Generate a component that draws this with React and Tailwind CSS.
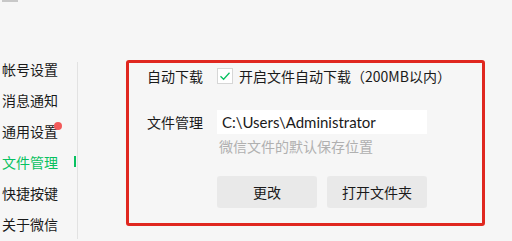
export default function App() {
  const items = ["帐号设置", "消息通知", "通用设置", "文件管理", "快捷按键", "关于微信"];
  return (
    <div
      className="w-[512px] h-[241px] bg-[#f6f6f6] overflow-hidden flex flex-col text-[#1a1a1a]"
      style={{ fontFamily: '"Noto Sans CJK SC", "Noto Sans", sans-serif' }}
    >
      <div className="ml-[2px] w-[16px] h-[2px] bg-[#c8c8c8] shrink-0" />
      <div className="flex flex-1">
        {/* sidebar */}
        <div className="w-[78px] flex flex-col pt-[51px]">
          {items.map((x, index) => (
            <div
              key={index}
              className={
                "relative h-[31px] flex items-center pl-[2px] text-[14px] leading-none border-r " +
                (index === 0 ? "border-transparent" : "border-[#e2e2e2]")
              }
            >
              {index === 0 && (
                <span className="absolute right-[-1px] top-[9px] bottom-0 w-px bg-[#e2e2e2]" />
              )}
              <span className={index === 3 ? "text-[#07c160]" : ""}>{x}</span>
              {index === 2 && (
                <span className="absolute left-[54px] top-[7px] w-[8px] h-[8px] rounded-full bg-[#f25a5a]" />
              )}
              {index === 3 && (
                <span className="absolute right-[1px] top-[10px] w-[2px] h-[11px] bg-[#07c160]" />
              )}
            </div>
          ))}
        </div>
        {/* content */}
        <div className="pl-[48px] pt-[58px]">
          <div className="w-[359px] h-[166px] border-[3px] border-[#e0271f] rounded-[3px] pl-[18px] pt-[4px] text-[14px]">
            <div className="flex items-center h-[16px] mt-px">
              <span className="w-[70px]">自动下载</span>
              <span className="w-[16px] h-[16px] border border-[#d6d6d6] bg-white flex items-center justify-center">
                <svg width="12" height="12" viewBox="0 0 12 12">
                  <path d="M1.5 6.2 L4.6 9.2 L10.5 2.8" fill="none" stroke="#07c160" strokeWidth="1.3" />
                </svg>
              </span>
              <span className="ml-[6px]">开启文件自动下载（200MB以内）</span>
            </div>
            <div className="flex items-center mt-[26px]">
              <span className="w-[70px]">文件管理</span>
              <div
                className="w-[210px] h-[24px] bg-white flex items-center pl-[5px] text-[15px]"
                style={{ fontFamily: 'Lato, "Noto Sans", sans-serif' }}
              >
                C:\Users\Administrator
              </div>
            </div>
            <div className="ml-[72px] mt-[3px] text-[14px] text-[#b0b0b0] leading-[19px]">
              微信文件的默认保存位置
            </div>
            <div className="flex gap-[10px] ml-[70px] mt-[20px]">
              <button className="w-[100px] h-[32px] bg-[#e9e9e9] rounded-[3px] text-[14px]">更改</button>
              <button className="w-[100px] h-[32px] bg-[#e9e9e9] rounded-[3px] text-[14px]">打开文件夹</button>
            </div>
          </div>
        </div>
      </div>
    </div>
  );
}
